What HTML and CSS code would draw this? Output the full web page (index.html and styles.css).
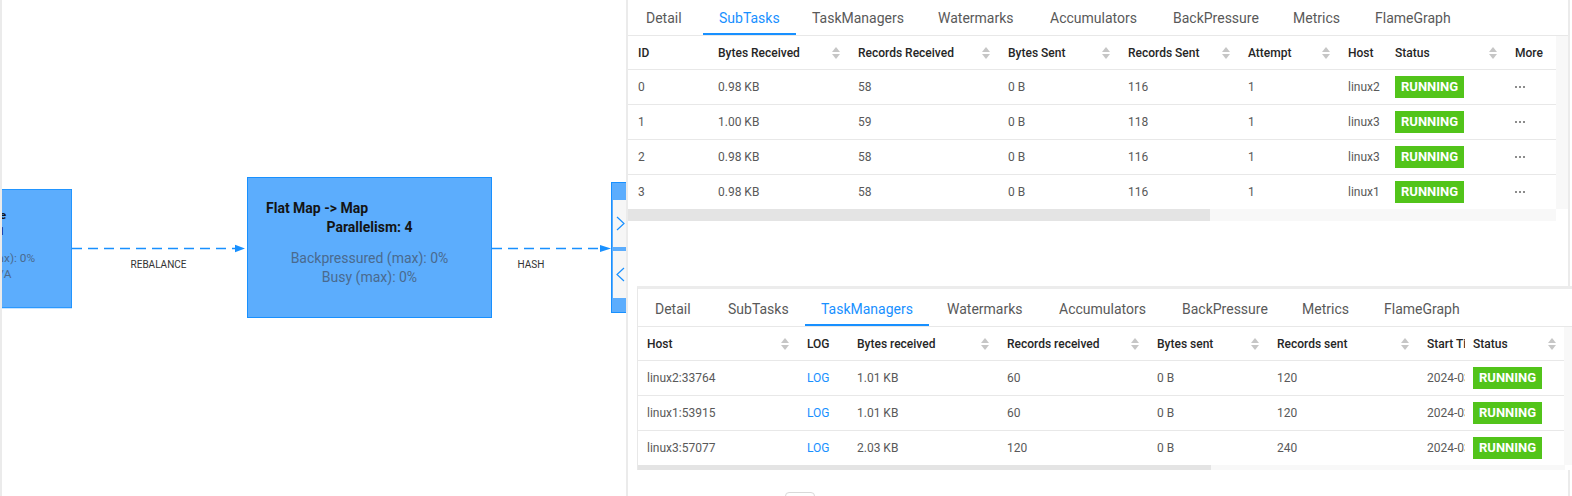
FILE: index.html
```html
<!DOCTYPE html>
<html>
<head>
<meta charset="utf-8">
<link rel="stylesheet" href="styles.css">
</head>
<body>
<div class="app">
  <div class="graph">
    <svg class="edges" width="626" height="496" viewBox="0 0 626 496">
      <line class="edge" x1="72" y1="248.5" x2="236" y2="248.5"/>
      <polygon class="arrow" points="235,244.8 245,248.5 235,252.2"/>
      <text class="elabel" x="158.5" y="268" text-anchor="middle">REBALANCE</text>
      <line class="edge" x1="492" y1="248.5" x2="601" y2="248.5"/>
      <polygon class="arrow" points="600,245 611,248.5 600,252"/>
      <text class="elabel" x="531" y="268" text-anchor="middle">HASH</text>
    </svg>
    <div class="node node-a">
      <div class="node-title">Source: Custom Source</div>
      <div class="node-par">Parallelism: 1</div>
      <div class="node-metrics">
        <div>Backpressured (max): 0%</div>
        <div>Busy (max): N/A</div>
      </div>
    </div>
    <div class="node node-b">
      <div class="node-title">Flat Map -&gt; Map</div>
      <div class="node-par">Parallelism: 4</div>
      <div class="node-metrics">
        <div>Backpressured (max): 0%</div>
        <div>Busy (max): 0%</div>
      </div>
    </div>
    <div class="node node-c"></div>
    <div class="toggle">
      <div class="toggle-btn"><svg width="9" height="15" viewBox="0 0 9 15"><polyline points="1,1 8,7.5 1,14"/></svg></div>
      <div class="toggle-btn"><svg width="9" height="15" viewBox="0 0 9 15"><polyline points="8,1 1,7.5 8,14"/></svg></div>
    </div>
  </div>

  <div class="panel">
    <div class="tabs tabs-top">
      <div class="tab"><span class="tab-label">Detail</span></div>
      <div class="tab"><span class="tab-label active">SubTasks</span></div>
      <div class="tab"><span class="tab-label">TaskManagers</span></div>
      <div class="tab"><span class="tab-label">Watermarks</span></div>
      <div class="tab"><span class="tab-label">Accumulators</span></div>
      <div class="tab"><span class="tab-label">BackPressure</span></div>
      <div class="tab"><span class="tab-label">Metrics</span></div>
      <div class="tab"><span class="tab-label">FlameGraph</span></div>
    </div>
    <div class="tbl-wrap">
      <div class="tbl tbl-sub">
        <div class="tr th">
          <div class="cell">ID</div>
          <div class="cell">Bytes Received<span class="sorter"></span></div>
          <div class="cell">Records Received<span class="sorter"></span></div>
          <div class="cell">Bytes Sent<span class="sorter"></span></div>
          <div class="cell">Records Sent<span class="sorter"></span></div>
          <div class="cell">Attempt<span class="sorter"></span></div>
          <div class="cell">Host</div>
          <div class="cell">Status<span class="sorter"></span></div>
          <div class="cell">More</div>
        </div>
        <div class="tr">
          <div class="cell">0</div><div class="cell">0.98 KB</div><div class="cell">58</div><div class="cell">0 B</div><div class="cell">116</div><div class="cell">1</div><div class="cell">linux2</div>
          <div class="cell"><span class="badge">RUNNING</span></div>
          <div class="cell"><svg class="dots" width="10" height="2" viewBox="0 0 10 2"><rect x="0" width="2" height="2"/><rect x="4" width="2" height="2"/><rect x="8" width="2" height="2"/></svg></div>
        </div>
        <div class="tr">
          <div class="cell">1</div><div class="cell">1.00 KB</div><div class="cell">59</div><div class="cell">0 B</div><div class="cell">118</div><div class="cell">1</div><div class="cell">linux3</div>
          <div class="cell"><span class="badge">RUNNING</span></div>
          <div class="cell"><svg class="dots" width="10" height="2" viewBox="0 0 10 2"><rect x="0" width="2" height="2"/><rect x="4" width="2" height="2"/><rect x="8" width="2" height="2"/></svg></div>
        </div>
        <div class="tr">
          <div class="cell">2</div><div class="cell">0.98 KB</div><div class="cell">58</div><div class="cell">0 B</div><div class="cell">116</div><div class="cell">1</div><div class="cell">linux3</div>
          <div class="cell"><span class="badge">RUNNING</span></div>
          <div class="cell"><svg class="dots" width="10" height="2" viewBox="0 0 10 2"><rect x="0" width="2" height="2"/><rect x="4" width="2" height="2"/><rect x="8" width="2" height="2"/></svg></div>
        </div>
        <div class="tr">
          <div class="cell">3</div><div class="cell">0.98 KB</div><div class="cell">58</div><div class="cell">0 B</div><div class="cell">116</div><div class="cell">1</div><div class="cell">linux1</div>
          <div class="cell"><span class="badge">RUNNING</span></div>
          <div class="cell"><svg class="dots" width="10" height="2" viewBox="0 0 10 2"><rect x="0" width="2" height="2"/><rect x="4" width="2" height="2"/><rect x="8" width="2" height="2"/></svg></div>
        </div>
      </div>
      <div class="vgutter"></div>
    </div>
    <div class="hscroll hscroll-top"><div class="thumb thumb-top"></div></div>
    <div class="pager"></div>
  </div>

  <div class="card">
    <div class="tabs tabs-card">
      <div class="tab"><span class="tab-label">Detail</span></div>
      <div class="tab"><span class="tab-label">SubTasks</span></div>
      <div class="tab"><span class="tab-label active">TaskManagers</span></div>
      <div class="tab"><span class="tab-label">Watermarks</span></div>
      <div class="tab"><span class="tab-label">Accumulators</span></div>
      <div class="tab"><span class="tab-label">BackPressure</span></div>
      <div class="tab"><span class="tab-label">Metrics</span></div>
      <div class="tab"><span class="tab-label">FlameGraph</span></div>
    </div>
    <div class="tbl-wrap">
      <div class="tbl tbl-tm">
        <div class="tr th">
          <div class="cell c-host">Host<span class="sorter"></span></div>
          <div class="cell">LOG</div>
          <div class="cell">Bytes received<span class="sorter"></span></div>
          <div class="cell">Records received<span class="sorter"></span></div>
          <div class="cell">Bytes sent<span class="sorter"></span></div>
          <div class="cell">Records sent<span class="sorter"></span></div>
          <div class="cell c-clip">Start Time</div>
          <div class="cell c-status">Status<span class="sorter"></span></div>
        </div>
        <div class="tr">
          <div class="cell c-host">linux2:33764</div><div class="cell link">LOG</div><div class="cell">1.01 KB</div><div class="cell">60</div><div class="cell">0 B</div><div class="cell">120</div><div class="cell c-clip">2024-03-12 10:21:33</div>
          <div class="cell c-status"><span class="badge">RUNNING</span></div>
        </div>
        <div class="tr">
          <div class="cell c-host">linux1:53915</div><div class="cell link">LOG</div><div class="cell">1.01 KB</div><div class="cell">60</div><div class="cell">0 B</div><div class="cell">120</div><div class="cell c-clip">2024-03-12 10:21:33</div>
          <div class="cell c-status"><span class="badge">RUNNING</span></div>
        </div>
        <div class="tr">
          <div class="cell c-host">linux3:57077</div><div class="cell link">LOG</div><div class="cell">2.03 KB</div><div class="cell">120</div><div class="cell">0 B</div><div class="cell">240</div><div class="cell c-clip">2024-03-12 10:21:33</div>
          <div class="cell c-status"><span class="badge">RUNNING</span></div>
        </div>
      </div>
      <div class="vgutter"></div>
    </div>
    <div class="hscroll hscroll-card"><div class="thumb thumb-card"></div></div>
  </div>
</div>
</body>
</html>
```

FILE: styles.css
```css
* { box-sizing: border-box; }

html, body {
  margin: 0;
  padding: 0;
  background: #fff;
}

body {
  font-family: Roboto, "Liberation Sans", sans-serif;
  overflow: hidden;
}

.app {
  position: relative;
  display: flex;
  width: 1572px;
  height: 496px;
  overflow: hidden;
  background: #fff;
}

/* ---------- graph canvas ---------- */
.graph {
  position: relative;
  flex: none;
  width: 626px;
  height: 496px;
  overflow: hidden;
}

.graph::before {
  content: "";
  position: absolute;
  left: 0;
  top: 0;
  width: 2px;
  height: 100%;
  background: #ebebeb;
  z-index: 3;
}

.edges {
  position: absolute;
  left: 0;
  top: 0;
}

.edge {
  stroke: #1890ff;
  stroke-width: 1.5;
  stroke-dasharray: 10 6;
  fill: none;
}

.arrow { fill: #1890ff; }

.elabel {
  font-family: Roboto, "Liberation Sans", sans-serif;
  font-size: 10px;
  fill: #333;
}

.node {
  position: absolute;
  width: 245px;
  height: 141px;
  border: 1px solid #1890ff;
  background: #5cadfd;
  padding-top: 20px;
}

.node-a {
  left: -173px;
  top: 189px;
  transform: scale(0.845);
  transform-origin: right top;
}

.node-b {
  left: 247px;
  top: 177px;
}

.node-c {
  left: 611px;
  top: 182px;
  width: 40px;
  height: 131px;
  padding: 0;
}

.node-title {
  font-size: 14px;
  line-height: 20px;
  font-weight: 700;
  color: #141414;
  padding-left: 18px;
  white-space: nowrap;
}

.node-par {
  font-size: 14px;
  line-height: 18px;
  font-weight: 700;
  color: #141414;
  text-align: center;
}

.node-metrics {
  margin-top: 13px;
  font-size: 14px;
  line-height: 19px;
  color: #4a6a8e;
  text-align: center;
  white-space: nowrap;
}

.toggle {
  position: absolute;
  left: 613px;
  top: 200px;
  width: 16px;
  display: flex;
  flex-direction: column;
  gap: 4px;
}

.toggle-btn {
  height: 47px;
  background: #f6f6f6;
  display: flex;
  align-items: center;
  padding-left: 3px;
}

.toggle-btn polyline {
  fill: none;
  stroke: #1890ff;
  stroke-width: 1.2;
}

/* ---------- right panel ---------- */
.panel {
  flex: none;
  width: 944px;
  height: 496px;
  border-left: 2px solid #ebebeb;
  border-right: 2px solid #ebebeb;
  background: #fff;
}

.tabs {
  display: flex;
  height: 38px;
  border-bottom: 1px solid #e8e8e8;
}

.tabs-top {
  margin-top: -2px;
  padding-left: 2px;
}

.tabs-card {
  padding-left: 1px;
}

.tab {
  flex: none;
  white-space: nowrap;
}

.tab:nth-child(1) { width: 73px; }
.tab:nth-child(2) { width: 93px; }
.tab:nth-child(3) { width: 126px; }
.tab:nth-child(4) { width: 112px; }
.tab:nth-child(5) { width: 123px; }
.tab:nth-child(6) { width: 120px; }
.tab:nth-child(7) { width: 82px; }
.tab:nth-child(8) { width: 110px; }

.tab-label {
  display: inline-block;
  padding: 9px 16px 4px;
  line-height: 22px;
  font-size: 14px;
  color: #595959;
  border-bottom: 2px solid transparent;
}

.tab-label.active {
  color: #1890ff;
  border-bottom-color: #1890ff;
}

.tbl-wrap {
  display: flex;
}

.tbl { flex: none; }
.tbl-sub { width: 928px; }
.tbl-tm { width: 926px; }

.tr {
  display: grid;
  align-items: center;
  height: 35px;
  border-bottom: 1px solid #e8e8e8;
}

.tr:last-child {
  border-bottom: none;
  height: 34px;
}

.tr.th {
  height: 34px;
}

.tbl-sub .tr {
  grid-template-columns: 80px 140px 150px 120px 120px 100px 47px 120px 51px;
}

.tbl-tm .tr {
  grid-template-columns: 159px 50px 150px 150px 120px 150px 48px 99px;
}

.cell {
  padding: 0 8px 0 10px;
  font-size: 12px;
  line-height: 16px;
  color: #595959;
  white-space: nowrap;
}

.th .cell {
  display: flex;
  align-items: center;
  justify-content: space-between;
  color: #262626;
  font-weight: 500;
}

.cell.c-host { padding-left: 9px; }
.cell.c-status { padding-left: 8px; }
.cell.c-clip { overflow: hidden; padding-right: 0; }
.th .cell.c-clip { justify-content: flex-start; }

.cell.link { color: #1890ff; }

.sorter {
  display: inline-flex;
  flex-direction: column;
  gap: 2px;
  flex: none;
}

.sorter::before,
.sorter::after {
  content: "";
  width: 0;
  height: 0;
  border-left: 4px solid transparent;
  border-right: 4px solid transparent;
}

.sorter::before { border-bottom: 5px solid #c6c6c6; }
.sorter::after { border-top: 5px solid #c6c6c6; }

.badge {
  display: inline-block;
  height: 22px;
  line-height: 22px;
  padding: 0 6px;
  background: #52c41a;
  color: #fff;
  font-size: 13px;
  font-weight: 700;
  vertical-align: middle;
}

.dots {
  display: block;
  fill: #8c8c8c;
}

.vgutter {
  flex: none;
  width: 12px;
  background: #f8f8f8;
}

.hscroll {
  height: 12px;
  background: #f8f8f8;
}

.hscroll-top { width: 928px; }
.hscroll-card { width: 927px; }

.thumb {
  height: 100%;
  background: #e4e4e4;
}

.thumb-top { width: 582px; }
.thumb-card { width: 573px; }

.pager {
  margin: 271px 0 0 157px;
  width: 30px;
  height: 30px;
  border: 1px solid #d9d9d9;
  border-radius: 4px;
}

/* ---------- overlaid detail card ---------- */
.card {
  position: absolute;
  left: 637px;
  top: 286px;
  width: 945px;
  height: 184px;
  overflow: hidden;
  background: #fff;
  border-top: 3px solid #ececec;
  border-left: 1px solid #e8e8e8;
}
```
